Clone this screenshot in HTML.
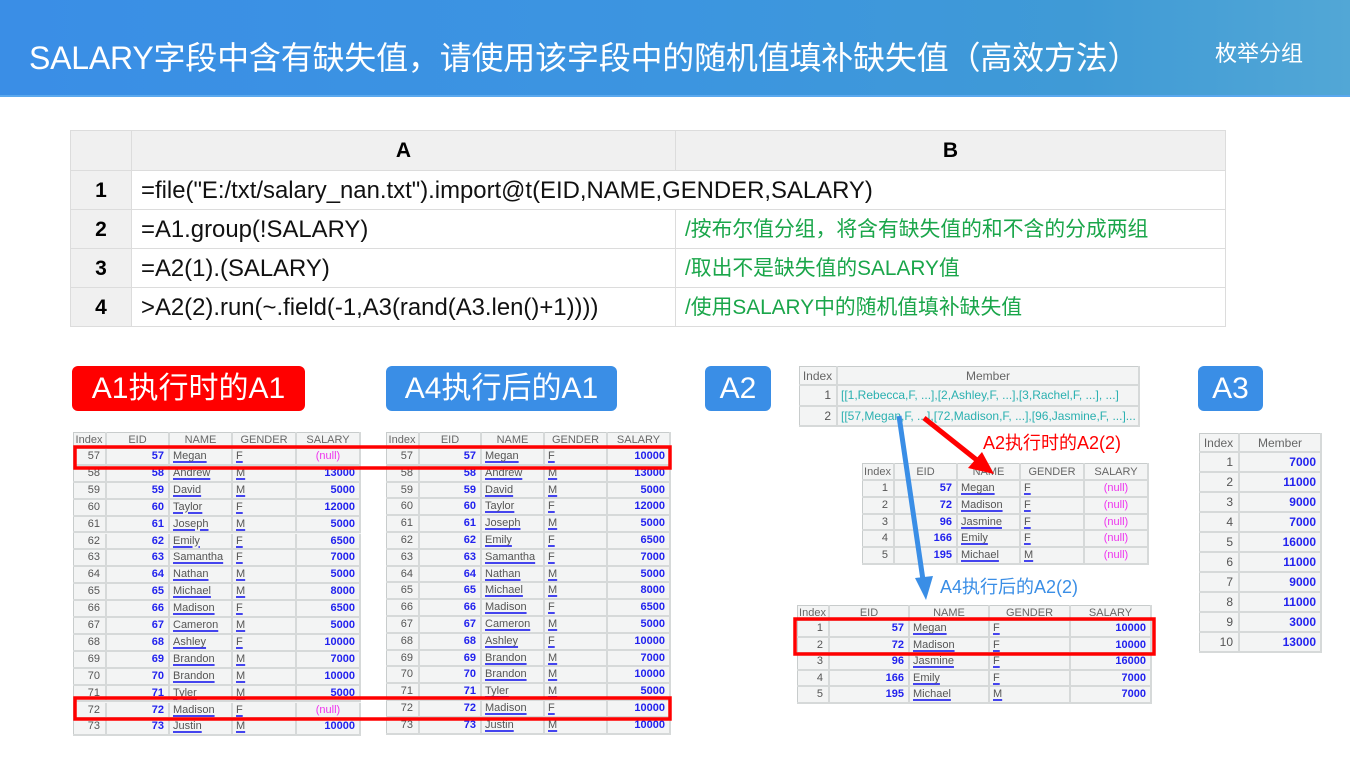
<!DOCTYPE html>
<html><head><meta charset="utf-8">
<style>
*{margin:0;padding:0;box-sizing:border-box}
body{width:1350px;height:759px;position:relative;overflow:hidden;background:#fff;font-family:"Liberation Sans","Noto Sans CJK SC",sans-serif}
.hdr{position:absolute;left:0;top:0;width:1350px;height:97px;background:linear-gradient(90deg,#3a8ee6 0%,#3c95e0 50%,#3f9ad6 80%,#52a7d6 100%);border-bottom:2px solid #5aa8ee}
.hdr .t{position:absolute;left:29px;top:33px;color:#fff;font-size:32px;letter-spacing:-0.2px;white-space:nowrap}
.hdr .r{position:absolute;left:1215px;top:36px;color:#fff;font-size:22px}
.abs{position:absolute}
.c{position:absolute;overflow:hidden;white-space:nowrap}
.lbl{position:absolute;color:#fff;font-size:30px;border-radius:6px;text-align:center;line-height:45px;height:45px}
.u{text-decoration:underline;text-decoration-color:#4444ee;text-decoration-thickness:1.5px;text-underline-offset:2px}
</style></head><body>
<div class="hdr"><div class="t">SALARY字段中含有缺失值，请使用该字段中的随机值填补缺失值（高效方法）</div><div class="r">枚举分组</div></div>

<div id="code" class="abs" style="left:70px;top:130px;width:1156px;height:197px"></div>

<div class="lbl" style="left:72px;top:366px;width:233px;background:#f00">A1执行时的A1</div>
<div class="lbl" style="left:386px;top:366px;width:231px;background:#3a8ee6">A4执行后的A1</div>
<div class="lbl" style="left:705px;top:366px;width:66px;background:#3a8ee6">A2</div>
<div class="lbl" style="left:1198px;top:366px;width:65px;background:#3a8ee6">A3</div>

<div id="root"></div>

<div class="abs" style="left:983px;top:429px;color:#f00;font-size:18px">A2执行时的A2(2)</div>
<div class="abs" style="left:940px;top:573px;color:#3a8ee6;font-size:18px">A4执行后的A2(2)</div>

<svg class="abs" style="left:0;top:0" width="1350" height="759">
<line x1="924" y1="418" x2="978" y2="461" stroke="#f00" stroke-width="5"/>
<polygon points="994,474 968,468 982,452" fill="#f00"/>
<line x1="899" y1="416" x2="923" y2="580" stroke="#3a8ee6" stroke-width="5"/>
<polygon points="926,600 915,578 933,576" fill="#3a8ee6"/>
<rect x="75" y="447" width="595" height="21" fill="none" stroke="#f00" stroke-width="3.5"/>
<rect x="75" y="698" width="595" height="21" fill="none" stroke="#f00" stroke-width="3.5"/>
<rect x="795" y="619" width="359" height="35" fill="none" stroke="#f00" stroke-width="3.5"/>
</svg>

<script>
(function(){
 var el=document.getElementById('code');
 var rows=[0,40,79,118,157,196];
 var h='';
 var A=['=file("E:/txt/salary_nan.txt").import@t(EID,NAME,GENDER,SALARY)','=A1.group(!SALARY)','=A2(1).(SALARY)','>A2(2).run(~.field(-1,A3(rand(A3.len()+1))))'];
 var B=['','/按布尔值分组，将含有缺失值的和不含的分成两组','/取出不是缺失值的SALARY值','/使用SALARY中的随机值填补缺失值'];
 function cell(x,y,w,hh,bg,txt,st){h+='<div class="c" style="left:'+x+'px;top:'+y+'px;width:'+w+'px;height:'+hh+'px;background:'+bg+';border-right:1px solid #dcdcdc;border-bottom:1px solid #dcdcdc;line-height:'+hh+'px;'+st+'">'+txt+'</div>';}
 cell(0,0,61,40,'#f0f0f0','','');
 cell(61,0,544,40,'#f0f0f0','A','text-align:center;font-weight:bold;font-size:21px;');
 cell(605,0,550,40,'#f0f0f0','B','text-align:center;font-weight:bold;font-size:21px;');
 for(var i=0;i<4;i++){var y=rows[i+1],hh=rows[i+2]-rows[i+1];
  cell(0,y,61,hh,'#f0f0f0',String(i+1),'text-align:center;font-weight:bold;font-size:21px;');
  if(i==0){cell(61,y,1094,hh,'#fff',A[i],'padding-left:9px;font-size:23.9px;color:#111;');}
  else{cell(61,y,544,hh,'#fff',A[i],'padding-left:9px;font-size:23.9px;color:#111;');
   cell(605,y,550,hh,'#fff',B[i],'padding-left:9px;font-size:20.8px;color:#1aa64a;');}
 }
 el.innerHTML=h;el.style.borderTop='1px solid #dcdcdc';el.style.borderLeft='1px solid #dcdcdc';
})();
var root=document.getElementById('root'),H='';
function grid(x0,y0,cw,hh,rh,head,data,types,fs){
 H+='<div class="abs" style="left:'+x0+'px;top:'+y0+'px;width:'+(cw[cw.length-1]-cw[0])+'px;height:'+(hh+rh*data.length)+'px;background:#f3f4f4;border-left:1px solid #c8cccc;border-top:1px solid #c8cccc"></div>';
 for(var j=0;j<head.length;j++){
  H+='<div class="c" style="left:'+cw[j]+'px;top:'+y0+'px;width:'+(cw[j+1]-cw[j])+'px;height:'+hh+'px;line-height:'+hh+'px;text-align:center;color:#666;font-size:'+fs+'px;border-right:2px solid #d6d9d9;border-bottom:2px solid #d6d9d9">'+head[j]+'</div>';
 }
 for(var i=0;i<data.length;i++){var y=y0+hh+i*rh;
  for(var j=0;j<head.length;j++){var v=data[i][j],t=types[j],st='';
   if(t=='i')st='text-align:right;padding-right:5px;color:#555;';
   else if(t=='n')st='text-align:right;padding-right:4px;color:#2222ee;font-weight:bold;';
   else if(t=='l')st='padding-left:3px;color:#555;';
   else if(t=='m')st='padding-left:3px;color:#2ab0b0;';
   if(t=='l')v='<span class="u">'+v+'</span>';
   if(t=='n'&&v=='(null)')st='text-align:center;color:#ee33ee;';
   H+='<div class="c" style="left:'+cw[j]+'px;top:'+y+'px;width:'+(cw[j+1]-cw[j])+'px;height:'+rh+'px;line-height:'+(rh-1)+'px;font-size:'+fs+'px;border-right:2px solid #d6d9d9;border-bottom:2px solid #d6d9d9;'+st+'">'+v+'</div>';
  }}
}
var names=['Megan','Andrew','David','Taylor','Joseph','Emily','Samantha','Nathan','Michael','Madison','Cameron','Ashley','Brandon','Brandon','Tyler','Madison','Justin'];
var gen=['F','M','M','F','M','F','F','M','M','F','M','F','M','M','M','F','M'];
var sal1=['(null)','13000','5000','12000','5000','6500','7000','5000','8000','6500','5000','10000','7000','10000','5000','(null)','10000'];
var d1=[],d2=[];
for(var i=0;i<17;i++){d1.push([57+i,57+i,names[i],gen[i],sal1[i]]);var s=sal1[i]=='(null)'?'10000':sal1[i];d2.push([57+i,57+i,names[i],gen[i],s]);}
var hd=['Index','EID','NAME','GENDER','SALARY'],ty=['i','n','l','l','n'];
grid(73,432,[73,107,170,233,297,361],17,16.9,hd,d1,ty,11);
grid(386,432,[386,420,482,545,608,671],17,16.8,hd,d2,ty,11);
grid(799,366,[799,838,1140],20,20.5,['Index','Member'],[[1,'[[1,Rebecca,F, ...],[2,Ashley,F, ...],[3,Rachel,F, ...], ...]'],[2,'[[57,Megan,F, ...],[72,Madison,F, ...],[96,Jasmine,F, ...]...']],['i','m'],12);
var n5=[['1','57','Megan','F','(null)'],['2','72','Madison','F','(null)'],['3','96','Jasmine','F','(null)'],['4','166','Emily','F','(null)'],['5','195','Michael','M','(null)']];
grid(862,463,[862,895,958,1021,1085,1149],18,16.8,hd,n5,ty,11);
var f5=[['1','57','Megan','F','10000'],['2','72','Madison','F','10000'],['3','96','Jasmine','F','16000'],['4','166','Emily','F','7000'],['5','195','Michael','M','7000']];
grid(797,605,[797,830,910,990,1071,1152],16,16.6,hd,f5,ty,11);
var a3=['7000','11000','9000','7000','16000','11000','9000','11000','3000','13000'],d3=[];
for(var i=0;i<10;i++)d3.push([i+1,a3[i]]);
grid(1199,433,[1199,1240,1322],20,20,['Index','Member'],d3,['i','n'],12);
root.innerHTML=H;
</script>
</body></html>
